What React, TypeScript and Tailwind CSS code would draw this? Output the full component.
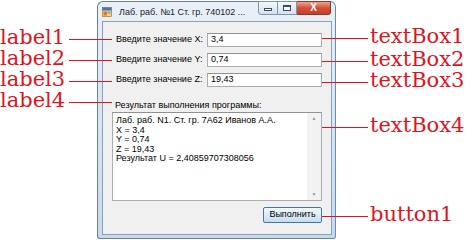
const ui = { fontFamily: '"Liberation Sans", Arial, sans-serif' };
const serif = { fontFamily: '"DejaVu Serif", "Liberation Serif", serif' };

const leftNotes = ['label1', 'label2', 'label3', 'label4'];

const rightNotes = [
  { text: 'textBox1', top: 'top-[26px]' },
  { text: 'textBox2', top: 'top-[49px]' },
  { text: 'textBox3', top: 'top-[70px]' },
  { text: 'textBox4', top: 'top-[115px]' },
  { text: 'button1', top: 'top-[204px]' },
];

function AppIcon() {
  return (
    <svg width="10" height="10" viewBox="0 0 10 10">
      <rect x="0.5" y="0.5" width="9" height="9" fill="#f7d36a" stroke="#8a6a2a" strokeWidth="0.6" />
      <rect x="0.5" y="0.5" width="9" height="3" fill="#3f72c8" />
      <rect x="1.5" y="4.5" width="3.5" height="4" fill="#e8742c" />
      <rect x="5.5" y="4.5" width="3" height="2" fill="#6fa9e6" />
    </svg>
  );
}

function CaptionButtons() {
  return (
    <div className="ml-auto -mt-[1px] mr-[1px] flex h-[14px]">
      <div className="w-[20px] h-full flex items-center justify-center border border-[#8194ad] rounded-bl-[3px] bg-gradient-to-b from-[#f4f8fc] to-[#d3e0ee]">
        <div className="w-[8px] h-[3px] border border-[#3c4a5c] bg-white mt-[3px]" />
      </div>
      <div className="w-[19px] h-full flex items-center justify-center border-y border-r border-[#8194ad] bg-gradient-to-b from-[#f4f8fc] to-[#d3e0ee]">
        <div className="w-[8px] h-[6px] border border-[#3c4a5c] border-t-2 bg-white" />
      </div>
      <div className="w-[34px] h-full flex items-center justify-center border-y border-r border-[#8a3a2e] rounded-br-[3px] bg-gradient-to-b from-[#e9a596] via-[#d05038] to-[#c83e28]">
        <span className="text-white text-[10px] font-bold leading-none" style={ui}>
          X
        </span>
      </div>
    </div>
  );
}

function TextBox({ value }: { value: string }) {
  return (
    <div className="ml-auto w-[115px] h-[14px] border border-[#abadb3] border-t-[#8e9198] bg-white pl-[3px] flex items-center text-[9px] text-black">
      {value}
    </div>
  );
}

function Window() {
  return (
    <div className="w-[239px] h-[238px] flex flex-col rounded-t-[6px] rounded-b-[3px] border border-[#6d7f96] border-r-[#5b8fcc] bg-gradient-to-b from-[#e9f0f8] to-[#c9d9ec] pl-[4px] pr-[3px] pb-[3px]" style={ui}>
      <div className="h-[19px] flex items-start">
        <div className="mt-[5px]">
          <AppIcon />
        </div>
        <span className="ml-[7px] mt-[5px] text-[9px] leading-[11px] text-[#1b1b1b]">
          Лаб. раб. №1 Ст. гр. 740102 ...
        </span>
        <CaptionButtons />
      </div>

      <div className="flex-1 flex flex-col border border-[#8aa1bd] bg-[#f0f0f0] pl-[9px] pr-[9px] pt-[11px] text-[9px] text-black">
        <div className="flex flex-col gap-[6px]">
          <div className="flex items-center">
            <span className="ml-[4px]">Введите значение X:</span>
            <TextBox value="3,4" />
          </div>
          <div className="flex items-center">
            <span className="ml-[4px]">Введите значение Y:</span>
            <TextBox value="0,74" />
          </div>
          <div className="flex items-center">
            <span className="ml-[4px]">Введите значение Z:</span>
            <TextBox value="19,43" />
          </div>
        </div>

        <div className="mt-[13px] ml-[3px] leading-[11px]">Результат выполнения программы:</div>

        <div className="mt-[1px] h-[89px] flex border border-[#abadb3] border-t-[#8e9198] bg-white">
          <div className="flex-1 pl-[3px] pt-[3px] leading-[9.6px]">
            <div>Лаб. раб. N1. Ст. гр. 7А62 Иванов А.А.</div>
            <div>X = 3,4</div>
            <div>Y = 0,74</div>
            <div>Z = 19,43</div>
            <div>Результат U = 2,40859707308056</div>
          </div>
          <div className="w-[14px] flex flex-col items-center justify-between bg-[#f2f2f2] py-[3px] text-[5px] text-[#9a9a9a] leading-none">
            <span>▲</span>
            <span>▼</span>
          </div>
        </div>

        <div className="mt-[6px] flex justify-end">
          <div className="w-[59px] h-[16px] flex items-center justify-center rounded-[2px] border border-[#3f77aa] bg-gradient-to-b from-[#f2f8fd] via-[#dcecf8] to-[#c4dcef] text-[9px] text-black">
            Выполнить
          </div>
        </div>
      </div>
    </div>
  );
}

export default function App() {
  return (
    <div className="relative w-[466px] h-[240px] bg-white overflow-hidden">
      <div className="pl-[97px] pt-[1px]">
        <Window />
      </div>

      <div className="absolute left-0 top-[27px] w-[112px] flex flex-col">
        {leftNotes.map((n) => (
          <div key={n} className="h-[21px] flex items-center">
            <span className="text-[21px] leading-[21px] text-[#e0141e]" style={serif}>
              {n}
            </span>
            <div className="flex-1 ml-[4px] h-px bg-[#e0141e] translate-y-[2px]" />
          </div>
        ))}
      </div>

      {rightNotes.map((n) => (
        <div key={n.text} className={`absolute left-[322px] ${n.top} h-[21px] flex items-center`}>
          <div className="w-[46px] h-px bg-[#e0141e] translate-y-[2px]" />
          <span className="ml-[2px] text-[21px] leading-[21px] text-[#e0141e]" style={serif}>
            {n.text}
          </span>
        </div>
      ))}
    </div>
  );
}
